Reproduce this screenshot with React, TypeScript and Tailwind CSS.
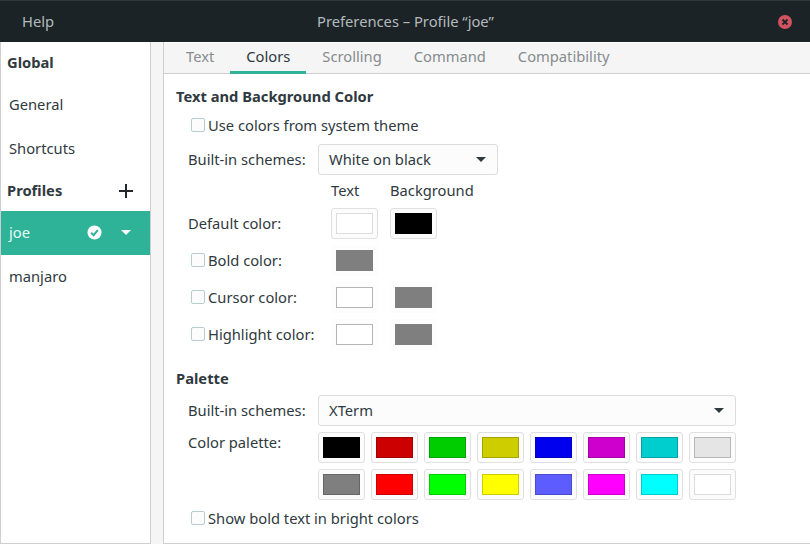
const paletteRows = [
  ["#000000", "#cc0000", "#00cd00", "#cdcd00", "#0000ee", "#cd00cd", "#00cdcd", "#e5e5e5"],
  ["#7f7f7f", "#ff0000", "#00ff00", "#ffff00", "#5c5cff", "#ff00ff", "#00ffff", "#ffffff"],
];

const tabs = ["Text", "Colors", "Scrolling", "Command", "Compatibility"];

function darker(hex: string) {
  // swatch outline is the fill at 80%
  const n = parseInt(hex.slice(1), 16);
  const c = [(n >> 16) & 255, (n >> 8) & 255, n & 255].map((v) => Math.round(v * 0.8));
  return `rgb(${c.join(",")})`;
}

function Caret({ color = "#2e3a3f" }: { color?: string }) {
  return (
    <svg width="10" height="5" viewBox="0 0 10 5">
      <path d="M0 0h10L5 5z" fill={color} />
    </svg>
  );
}

function Checkbox({ label }: { label: string }) {
  return (
    <div className="flex items-center">
      <span className="ml-[15px] mr-[3px] h-[14px] w-[14px] rounded-[2px] border border-[#b5cfce] bg-[#fcfcfc]" />
      <span>{label}</span>
    </div>
  );
}

function Swatch({ color, outline }: { color: string; outline?: string }) {
  return (
    <div className="flex h-[31px] w-[47px] items-center justify-center rounded-[3px] border border-[#e0e0e0] bg-[#fcfcfc]">
      <div className="h-[21px] w-[37px] border" style={{ backgroundColor: color, borderColor: outline ?? darker(color) }} />
    </div>
  );
}

// insensitive colour buttons: no frame, only the swatch on a faint plate
function FlatSwatch({ color }: { color: string }) {
  return (
    <div className="flex h-[31px] w-[47px] items-center justify-center bg-[#fdfdfd]">
      <div className="h-[21px] w-[37px] border" style={{ backgroundColor: color, borderColor: color === "#ffffff" ? "#b4b4b4" : color }} />
    </div>
  );
}

function Combo({ label, width }: { label: string; width: string }) {
  return (
    <div className={`flex h-[31px] items-center justify-between rounded-[3px] border border-[#dcdcdc] bg-[#fcfcfc] pl-[10px] pr-[11px] ${width}`}>
      <span>{label}</span>
      <Caret />
    </div>
  );
}

function ColorRow({ label, colors }: { label: string; colors: string[] }) {
  return (
    <div className="flex h-[37px] items-center">
      <div className="w-[155px]">
        <Checkbox label={label} />
      </div>
      <div className="flex gap-[12px]">
        {colors.map((c) => (
          <FlatSwatch key={c} color={c} />
        ))}
      </div>
    </div>
  );
}

export default function App() {
  return (
    <div className="flex h-[544px] w-[810px] flex-col overflow-hidden bg-[#f5f5f5] font-['Noto_Sans',sans-serif] text-[14.72px] text-[#2f3a40]">
      <header className="flex h-[42px] flex-none items-center border-t border-[#31383b] bg-[#1c2326] text-[#b3babc]">
        <span className="ml-[22px] w-[295px]">Help</span>
        <span className="flex-1">Preferences – Profile “joe”</span>
        <span className="mr-[18px] flex h-[14px] w-[14px] items-center justify-center rounded-full bg-[#d0535f]">
          <svg width="8" height="8" viewBox="0 0 8 8">
            <path d="M1.5 1.5l5 5M6.5 1.5l-5 5" stroke="#1c2326" strokeWidth="1.8" />
          </svg>
        </span>
      </header>

      <div className="flex min-h-0 flex-1">
        <aside className="h-full w-[151px] flex-none border-x border-b border-[#cfcfcf] bg-white">
          <div className="flex h-[40px] items-center pl-[6px] font-bold">Global</div>
          <div className="flex h-[44px] items-center pl-[8px]">General</div>
          <div className="flex h-[44px] items-center pl-[8px]">Shortcuts</div>
          <div className="flex h-[41px] items-center justify-between pl-[6px] pr-[17px] font-bold">
            Profiles
            <svg width="14" height="14" viewBox="0 0 14 14">
              <path d="M7 0v14M0 7h14" stroke="#232629" strokeWidth="2" />
            </svg>
          </div>
          <div className="flex h-[44px] items-center bg-[#2eb398] pb-[1px] pl-[8px] text-[#eafaf6]">
            <span className="flex-1">joe</span>
            <svg className="mr-[19px]" width="15" height="15" viewBox="0 0 16 16">
              <circle cx="8" cy="8" r="7.5" fill="#fff" />
              <path d="M4.4 8.2l2.6 2.6 4.6-5.4" fill="none" stroke="#2eb398" strokeWidth="2.2" />
            </svg>
            <span className="mr-[19px] flex">
              <Caret color="#ffffff" />
            </span>
          </div>
          <div className="flex h-[44px] items-center pb-[2px] pl-[8px]">manjaro</div>
        </aside>

        <main className="ml-[12px] flex min-w-0 flex-1 flex-col border-b border-l border-[#cfcfcf] bg-white">
          <div className="mt-px flex h-[31px] flex-none border-b border-[#cfcfcf] bg-[#f5f5f5] pl-[6px]">
            {tabs.map((t) => (
              <div
                key={t}
                className={
                  t === "Colors"
                    ? "-mb-px flex items-center border-b-[3px] border-[#2eb398] px-[16px] pb-[2px]"
                    : "-mb-px flex items-center border-b-[3px] border-transparent px-[16px] pb-[2px] text-[#868c8f]"
                }
              >
                {t}
              </div>
            ))}
          </div>

          <div className="flex-1 pl-[12px]">
            <h2 className="mt-[12px] flex h-[20px] items-center font-bold">Text and Background Color</h2>
            <div className="mt-[9px] flex h-[20px] items-center">
              <Checkbox label="Use colors from system theme" />
            </div>

            <div className="mt-[9px] flex items-center">
              <span className="w-[142px] pl-[12px]">Built-in schemes:</span>
              <Combo label="White on black" width="w-[180px]" />
            </div>

            <div className="mt-[5px] flex h-[20px] items-center">
              <span className="ml-[155px] w-[59px]">Text</span>
              <span>Background</span>
            </div>

            <div className="mt-[8px] flex items-center">
              <span className="w-[155px] pl-[12px]">Default color:</span>
              <div className="flex gap-[12px]">
                <Swatch color="#ffffff" outline="#dcdcdc" />
                <Swatch color="#000000" />
              </div>
            </div>

            <div className="mt-[3px]">
              <ColorRow label="Bold color:" colors={["#7f7f7f"]} />
              <ColorRow label="Cursor color:" colors={["#ffffff", "#7f7f7f"]} />
              <ColorRow label="Highlight color:" colors={["#ffffff", "#7f7f7f"]} />
            </div>

            <h2 className="mt-[15px] flex h-[20px] items-center font-bold">Palette</h2>

            <div className="mt-[7px] flex items-center">
              <span className="w-[142px] pl-[12px]">Built-in schemes:</span>
              <Combo label="XTerm" width="w-[418px]" />
            </div>

            <div className="mt-[6px] flex">
              <span className="w-[142px] pl-[12px] leading-[20px]">Color palette:</span>
              <div className="flex flex-col gap-[6px]">
                {paletteRows.map((row) => (
                  <div key={row[0]} className="flex gap-[6px]">
                    {row.map((c) => (
                      <Swatch key={c} color={c} outline={c === "#ffffff" ? "#dcdcdc" : undefined} />
                    ))}
                  </div>
                ))}
              </div>
            </div>

            <div className="mt-[8px] flex h-[20px] items-center">
              <Checkbox label="Show bold text in bright colors" />
            </div>
          </div>
        </main>
      </div>
    </div>
  );
}
